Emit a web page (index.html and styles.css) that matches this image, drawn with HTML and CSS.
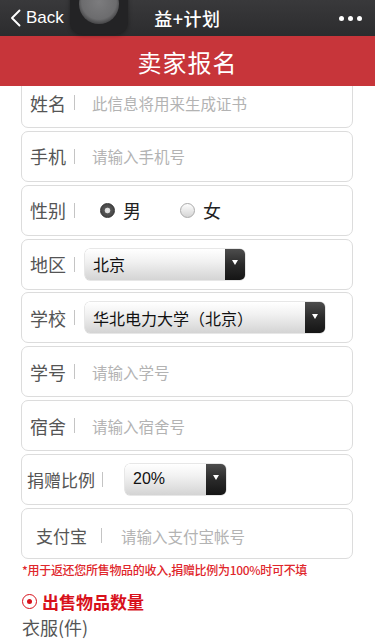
FILE: index.html
```html
<!DOCTYPE html>
<html lang="zh-CN">
<head>
<meta charset="utf-8">
<meta name="viewport" content="width=device-width, initial-scale=1">
<title>益+计划</title>
<link rel="stylesheet" href="styles.css">
</head>
<body>
<div class="topbar">
  <div class="back">
    <svg class="chev" width="11" height="18" viewBox="0 0 11 18"><path d="M9.5 1.5 L2 9 L9.5 16.5" fill="none" stroke="#fff" stroke-width="1.9" stroke-linecap="round" stroke-linejoin="round"/></svg>
    <span>Back</span>
  </div>
  <div class="title">益+计划</div>
  <div class="more"><i></i><i></i><i></i></div>
  <div class="float-btn"><span class="float-dot"></span></div>
</div>
<header class="banner">卖家报名</header>
<main class="form">
  <div class="row">
    <span class="label">姓名</span><span class="sep"></span><span class="ph">此信息将用来生成证书</span>
  </div>
  <div class="row">
    <span class="label">手机</span><span class="sep"></span><span class="ph">请输入手机号</span>
  </div>
  <div class="row">
    <span class="label">性别</span><span class="sep"></span>
    <span class="radio-group">
      <span class="opt"><span class="radio on"></span>男</span>
      <span class="opt"><span class="radio"></span>女</span>
    </span>
  </div>
  <div class="row">
    <span class="label">地区</span><span class="sep"></span>
    <span class="select sel-area"><span class="sel-text">北京</span><span class="sel-btn"><i></i></span></span>
  </div>
  <div class="row">
    <span class="label">学校</span><span class="sep"></span>
    <span class="select sel-school"><span class="sel-text">华北电力大学（北京）</span><span class="sel-btn"><i></i></span></span>
  </div>
  <div class="row">
    <span class="label">学号</span><span class="sep"></span><span class="ph">请输入学号</span>
  </div>
  <div class="row">
    <span class="label">宿舍</span><span class="sep"></span><span class="ph">请输入宿舍号</span>
  </div>
  <div class="row row-ratio">
    <span class="label">捐赠比例</span><span class="sep"></span>
    <span class="select sel-ratio"><span class="sel-text latin">20%</span><span class="sel-btn"><i></i></span></span>
  </div>
  <div class="row row-alipay">
    <span class="label">支付宝</span><span class="sep"></span><span class="ph">请输入支付宝帐号</span>
  </div>
  <p class="note">*用于返还您所售物品的收入,捐赠比例为100%时可不填</p>
  <h2 class="section"><span class="sec-icon"></span>出售物品数量</h2>
  <div class="item">衣服(件)</div>
</main>
</body>
</html>
```

FILE: styles.css
```css
* { box-sizing: border-box; }
html, body { margin: 0; padding: 0; background: #fff; }
body {
  font-family: "Noto Sans CJK SC", "Noto Sans", sans-serif;
  width: 375px;
  height: 640px;
  overflow: hidden;
}

.topbar {
  position: relative;
  z-index: 3;
  height: 36px;
  background: linear-gradient(#39393b, #2c2c2e);
  display: flex;
  align-items: center;
  color: #fff;
}
.back {
  display: flex;
  align-items: center;
  gap: 5px;
  padding-left: 10px;
  font-family: "Liberation Sans", "Inter", sans-serif;
  font-size: 17px;
  width: 120px;
}
.chev { display: block; }
.title {
  flex: 1;
  text-align: center;
  font-size: 18px;
  font-weight: 500;
  letter-spacing: 0.5px;
}
.more {
  width: 120px;
  display: flex;
  justify-content: flex-end;
  gap: 4px;
  padding-right: 13px;
}
.more i {
  width: 5px; height: 5px; border-radius: 50%; background: #fff; display: block;
}
.float-btn {
  position: absolute;
  left: 70px;
  top: -14px;
  width: 58px;
  height: 48px;
  border-radius: 12px;
  background: #232325;
  box-shadow: 0 1px 4px rgba(0,0,0,0.4);
  overflow: hidden;
}
.float-dot {
  position: absolute;
  left: 9px;
  top: -2px;
  width: 40px;
  height: 40px;
  border-radius: 50%;
  background: radial-gradient(circle at 50% 45%, #7c7c7e 0, #6c6c6e 58%, #4a4a4c 72%, #333335 100%);
}

.banner {
  position: relative;
  z-index: 2;
  height: 50px;
  margin: 0;
  background: #c7353a;
  color: #fff;
  font-size: 24px;
  font-weight: 400;
  display: flex;
  align-items: center;
  justify-content: center;
  letter-spacing: 1px;
}

.form {
  margin-top: -9px;
  padding: 0 22px 0 21px;
}
.row {
  height: 51px;
  margin-bottom: 2.85px;
  border: 1.5px solid #dcdcdc;
  border-radius: 7px;
  display: flex;
  align-items: center;
  padding-left: 8px;
  background: #fff;
}
.label {
  font-size: 18px;
  color: #555;
  line-height: 1;
}
.sep {
  width: 1px;
  height: 15px;
  background: #c4c4c4;
  margin-left: 8px;
  margin-right: 17px;
}
.ph {
  font-size: 15.5px;
  color: #b3b3b3;
}

.radio-group { display: flex; align-items: center; margin-left: 8px; gap: 0; }
.opt {
  display: flex;
  align-items: center;
  font-size: 18px;
  color: #222;
  width: 80px;
}
.radio {
  width: 15px;
  height: 15px;
  border-radius: 50%;
  margin-right: 8px;
  border: 1px solid #aaa;
  background: linear-gradient(#fdfdfd, #d5d5d5);
  display: inline-block;
}
.radio.on {
  border: 1px solid #333;
  background: radial-gradient(circle, #e8e8e8 0, #d8d8d8 2.5px, #555 3.2px, #3a3a3a 100%);
}

.select {
  height: 31px;
  border-radius: 5px;
  display: flex;
  align-items: stretch;
  background: linear-gradient(#ffffff, #f1f1f1 40%, #d4d4d4);
  box-shadow: 0 0 0 0.5px #cfcfcf;
  overflow: hidden;
  margin-left: -7px;
}
.sel-text {
  flex: 1;
  display: flex;
  align-items: center;
  padding-left: 8px;
  font-size: 16px;
  color: #111;
}
.sel-text.latin { font-family: "Liberation Sans", sans-serif; font-size: 16px; }
.sel-btn {
  width: 20px;
  background: linear-gradient(#4d4d4d, #2a2a2a 50%, #151515);
  display: flex;
  align-items: center;
  justify-content: center;
}
.sel-btn i {
  width: 0; height: 0;
  border-left: 3.5px solid transparent;
  border-right: 3.5px solid transparent;
  border-top: 5px solid #fff;
  margin-top: -3px;
}
.sel-area { width: 160px; }
.sel-school { width: 240px; }
.sel-ratio { width: 101px; margin-left: 2px; }

.row-ratio { padding-left: 5px; }
.row-ratio .label { font-size: 17px; }
.row-ratio .sep { margin-left: 7px; margin-right: 20px; }
.row-alipay { padding-left: 14px; }
.row-alipay .label { font-size: 17px; padding-top: 5px; }
.row-alipay .sep { margin-left: 14px; margin-right: 19px; margin-top: 5px; }
.row-alipay .ph { padding-top: 6px; }

.note {
  margin: 1px 0 0 1px;
  font-size: 12px;
  color: #e0262b;
  font-weight: 500;
  line-height: 16px;
  letter-spacing: -0.3px;
  white-space: nowrap;
}
.section {
  margin: 13px 0 0 1px;
  display: flex;
  align-items: center;
  font-size: 17px;
  font-weight: 700;
  color: #d8111b;
  line-height: 22px;
}
.sec-icon {
  width: 15px;
  height: 15px;
  border-radius: 50%;
  border: 1.5px solid #d8111b;
  margin-right: 5px;
  display: flex;
  align-items: center;
  justify-content: center;
  position: relative;
}
.sec-icon::after {
  content: "";
  width: 5px;
  height: 5px;
  border-radius: 50%;
  background: #d8111b;
}
.item {
  margin: 2px 0 0 1px;
  font-size: 18px;
  color: #555;
  line-height: 24px;
}
```
